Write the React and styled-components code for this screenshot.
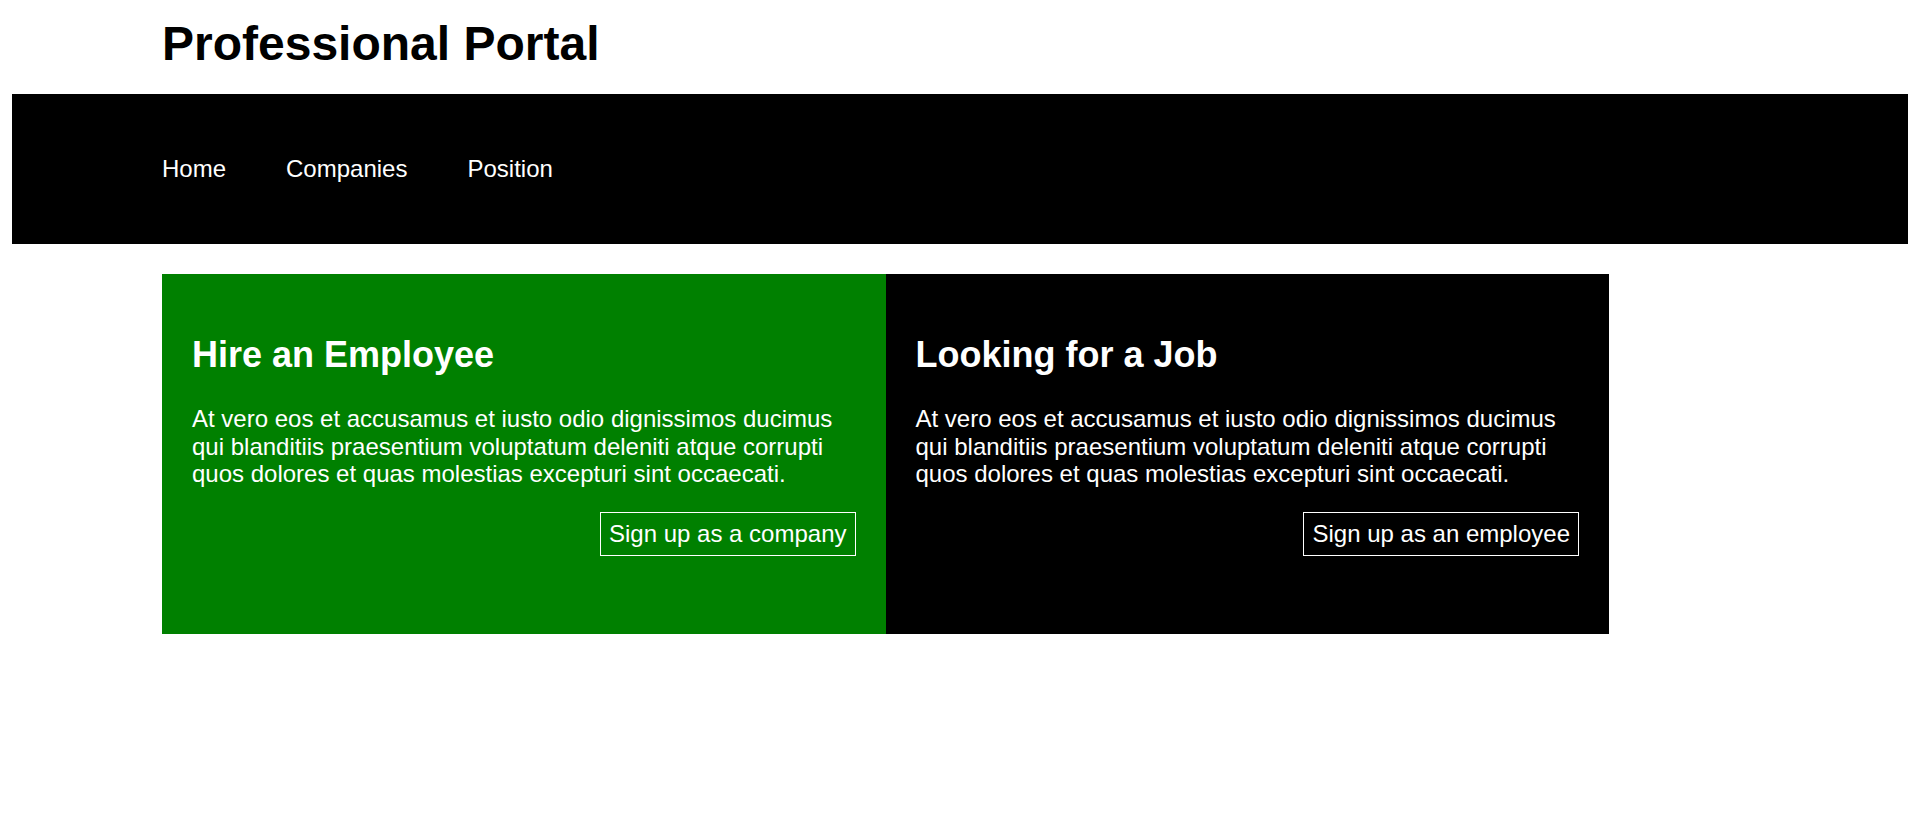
import styled, { createGlobalStyle } from "styled-components";

const GlobalStyle = createGlobalStyle`
  * {
    box-sizing: border-box;
  }

  body {
    margin: 0;
    background-color: white;
    font-family: "Liberation Sans", Arial, sans-serif;
  }
`;

const navLinks = ["Home", "Companies", "Position"];

const panels = [
  {
    title: "Hire an Employee",
    button: "Sign up as a company",
    tone: "green",
  },
  {
    title: "Looking for a Job",
    button: "Sign up as an employee",
    tone: "black",
  },
];

const blurb =
  "At vero eos et accusamus et iusto odio dignissimos ducimus qui blanditiis praesentium voluptatum deleniti atque corrupti quos dolores et quas molestias excepturi sint occaecati.";

const App = () => {
  return (
    <>
      <GlobalStyle />
      <Page>
        <Header>
          <Title>Professional Portal</Title>
        </Header>

        <NavBar>
          <NavList>
            {navLinks.map((link) => (
              <NavItem key={link} href="#">
                {link}
              </NavItem>
            ))}
          </NavList>
        </NavBar>

        <Main>
          <Panels>
            {panels.map((panel) => (
              <Panel key={panel.title} $tone={panel.tone}>
                <PanelTitle>{panel.title}</PanelTitle>
                <PanelText>{blurb}</PanelText>
                <ButtonRow>
                  <SignUpButton>{panel.button}</SignUpButton>
                </ButtonRow>
              </Panel>
            ))}
          </Panels>
        </Main>
      </Page>
    </>
  );
};

export default App;

const Page = styled.div`
  padding: 0 12px;
`;

const Header = styled.header`
  padding: 16px 0 23px 150px;
`;

const Title = styled.h1`
  margin: 0;
  font-size: 48px;
  font-weight: bold;
  line-height: 55px;
  color: black;
`;

const NavBar = styled.nav`
  height: 150px;
  background-color: black;
  display: flex;
  align-items: center;
  padding-left: 150px;
`;

const NavList = styled.div`
  display: flex;
  flex-direction: row;
  align-items: center;
  gap: 60px;
`;

const NavItem = styled.a`
  color: white;
  font-size: 24px;
  text-decoration: none;
`;

const Main = styled.main`
  padding: 30px 0 0 150px;
`;

const Panels = styled.div`
  width: 1447px;
  display: grid;
  grid-template-columns: 1fr 1fr;
`;

const Panel = styled.section`
  height: 360px;
  padding: 30px;
  background-color: ${(props) => (props.$tone === "green" ? "#008000" : "#000000")};
  color: white;
  display: flex;
  flex-direction: column;
`;

const PanelTitle = styled.h2`
  margin: 30px 0 30px;
  font-size: 36px;
  font-weight: bold;
  line-height: 41px;
`;

const PanelText = styled.p`
  margin: 0 0 24px;
  font-size: 24px;
  line-height: 27.6px;
`;

const ButtonRow = styled.div`
  display: flex;
  justify-content: flex-end;
`;

const SignUpButton = styled.button`
  background: transparent;
  color: white;
  border: 1px solid #ffffff;
  padding: 7.5px 8px;
  font-family: "Liberation Sans", Arial, sans-serif;
  font-size: 24px;
  line-height: 27.6px;
  cursor: pointer;
`;
